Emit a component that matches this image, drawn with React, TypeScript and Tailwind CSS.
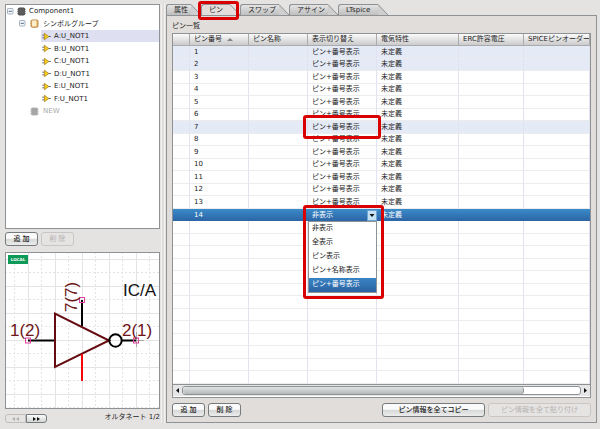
import { useState } from "react";

const TABS = ["属性", "ピン", "スワップ", "アサイン", "LTspice"];
const TAB_WIDTHS = ["w-[35px]", "w-[39px]", "w-[49px]", "w-[49px]", "w-[50px]"];
const SYMBOLS = ["A:U_NOT1", "B:U_NOT1", "C:U_NOT1", "D:U_NOT1", "E:U_NOT1", "F:U_NOT1"];
const OPTIONS = ["非表示", "全表示", "ピン表示", "ピン+名称表示", "ピン+番号表示"];
const COLUMNS = ["", "ピン番号", "ピン名称", "表示切り替え", "電気特性", "ERC許容電圧", "SPICEピンオーダー"];
const ROW_COUNT = 27;
const PIN_COUNT = 14;
const TINTED = [1, 2, 7];

const JP = "font-['DejaVu_Sans','Noto_Sans_CJK_JP',sans-serif]";

interface PushButtonProps {
    label: string;
    disabled?: boolean;
    className?: string;
}

const PushButton: React.FC<PushButtonProps> = ({ label, disabled, className = "w-[33px]" }) => (
    <button
        type="button"
        disabled={disabled}
        className={`h-[14px] shrink-0 whitespace-nowrap rounded-[3px] border text-[7px] leading-[12px] ${className} ${
            disabled
                ? "border-[#c9c7c6] bg-[#e6e4e3] text-[#b4b2b1]"
                : "border-[#777b7d] bg-linear-to-b from-[#fafafa] from-45% via-[#d6d8d8] via-50% to-[#ececec] font-medium text-[#222]"
        }`}
    >
        {label}
    </button>
);

const Expander = () => (
    <svg className="h-[7px] w-[7px] shrink-0" viewBox="0 0 7 7" aria-hidden="true">
        <rect x="0.5" y="0.5" width="5.5" height="5.5" rx="0.8" fill="#f4f7fb" stroke="#9aa8b8" strokeWidth="0.9" />
        <path d="M1.7 3.3h3.2" stroke="#3d5673" strokeWidth="0.9" />
    </svg>
);

const ChipIcon = ({ fill, edge }: { fill: string; edge: string }) => (
    <svg className="h-[9px] w-[9px] shrink-0" viewBox="0 0 9 9" aria-hidden="true">
        <path d="M0.4 2.4h8.2M0.4 4.5h8.2M0.4 6.6h8.2" stroke={edge} strokeWidth="0.9" opacity="0.7" />
        <rect x="1.3" y="0.9" width="6.4" height="7.2" rx="1.2" fill={fill} stroke={edge} strokeWidth="0.8" />
    </svg>
);

const GroupIcon = () => (
    <svg className="h-[9px] w-[9px] shrink-0" viewBox="0 0 9 9" aria-hidden="true">
        <path d="M0.4 2.4h8.2M0.4 4.5h8.2M0.4 6.6h8.2" stroke="#b98a4a" strokeWidth="0.9" opacity="0.7" />
        <rect x="1.1" y="0.9" width="6.8" height="7.4" rx="1.2" fill="#f0bd62" stroke="#a97b3c" strokeWidth="0.8" />
        <rect x="2" y="1.6" width="4.4" height="5.6" rx="0.6" fill="#fdeecb" />
    </svg>
);

const GateIcon = () => (
    <svg className="h-[9px] w-[9px] shrink-0" viewBox="0 0 9 9" aria-hidden="true">
        <path d="M0.3 3.2h2.2M0.3 5.8h2.2M6 4.5h2.8" stroke="#555" strokeWidth="0.9" />
        <path d="M2.4 1.2L6.8 4.5L2.4 7.8Z" fill="#f7cb1c" stroke="#a47c1c" strokeWidth="0.7" />
    </svg>
);

const TREE_ROW = "flex items-center whitespace-nowrap odd:h-[12px] even:h-[13px]";

const SymbolTree = () => (
    <ul className="min-h-[225px] flex-1 border border-[#8f9294] bg-white text-[7px] leading-[12px]">
        <li className={`${TREE_ROW} gap-[3px] pl-px`}>
            <Expander />
            <ChipIcon fill="#5c5c5c" edge="#444" />
            Component1
        </li>
        <li className={`${TREE_ROW} gap-[4px] pl-[13px]`}>
            <Expander />
            <GroupIcon />
            シンボルグループ
        </li>
        {SYMBOLS.map((name, i) => (
            <li key={name} className={`${TREE_ROW} pl-[35px]`}>
                <span className={`flex h-[12px] flex-1 items-center gap-[3px] pl-px ${i === 0 ? "bg-[#dedff0]" : ""}`}>
                    <GateIcon />
                    {name}
                </span>
            </li>
        ))}
        <li className={`${TREE_ROW} gap-[4px] pl-[24px] text-[#aaa]`}>
            <ChipIcon fill="#a5a5a5" edge="#b5b5b5" />
            NEW
        </li>
    </ul>
);

const GRID = [-20, 7, 34, 61, 88, 115, 142];

const Preview = () => (
    <div className="relative h-[157px] overflow-hidden border border-[#8f9294] bg-white">
        <svg
            className="h-[155px] w-[153px] font-['Liberation_Sans',Arial,sans-serif]"
            viewBox="1 1 153 155"
            role="img"
            aria-label="NOT gate symbol"
        >
            {GRID.map((p) => (
                <g key={p} stroke="#e4e4e4">
                    <path d={`M${p + 16.5} 0V160M0 ${p + 0.5}H160`} />
                    <path d={`M${p + 29.5} 0V160M0 ${p + 13.5}H160`} strokeDasharray="2 2" />
                </g>
            ))}
            <path d="M131.5 80v15M124 88.500h15" stroke="#999" strokeWidth="0.8" />
            <g fill="none" strokeWidth="2">
                <path d="M23 88.500H50M77 48V74M117 88.500H131" stroke="#000" />
                <path d="M50 61.500V115L104 88.500Z" stroke="#660c10" />
                <path d="M77 102V129" stroke="#f40808" />
                <circle cx="110.500" cy="88.500" r="6.200" stroke="#000" />
            </g>
            <g fill="none" stroke="#e0409c">
                <rect x="20.500" y="86" width="5" height="5" />
                <rect x="74.500" y="45.500" width="5" height="5" />
                <rect x="128.500" y="86" width="5" height="5" />
            </g>
            <g fontSize="17" fill="#6e1518">
                <text x="5" y="84">1(2)</text>
                <text x="117" y="84">2(1)</text>
                <text transform="translate(72 60) rotate(-90)">7(7)</text>
            </g>
            <text x="118" y="44" fontSize="17" fill="#111">
                IC/A
            </text>
        </svg>
        <span className="absolute left-[2px] top-[2px] h-[9px] w-[20px] bg-[#0d9a58] text-center text-[4px] font-bold leading-[9px] text-white">
            LOCAL
        </span>
    </div>
);

const DisplaySelect = () => {
    const [value, setValue] = useState(OPTIONS[0]);

    return (
        <>
            <div className="flex h-[12px] items-center">
                <select
                    aria-label="表示切り替え"
                    value={value}
                    onChange={(e) => setValue(e.target.value)}
                    className="h-[11px] min-w-0 flex-1 appearance-none bg-transparent pl-[4px] text-[7px] leading-[11px] text-white"
                >
                    {OPTIONS.map((o) => (
                        <option key={o}>{o}</option>
                    ))}
                </select>
                <span className="flex h-[11px] w-[10px] items-center justify-center border border-[#6fa5d3] bg-[#c5e1f6]">
                    <svg className="h-[3px] w-[6px]" viewBox="0 0 6 3" aria-hidden="true">
                        <path d="M0.500 0h5L3 3Z" fill="#111" />
                    </svg>
                </span>
            </div>
            <ul role="listbox" className="absolute left-0 top-full z-10 w-full border border-[#8f9294] bg-white text-[#222]">
                {OPTIONS.map((o, i) => (
                    <li
                        key={o}
                        role="option"
                        aria-selected={i === 4}
                        className={`h-[14px] whitespace-nowrap pl-[3px] leading-[13px] ${
                            i === 4 ? "bg-linear-to-b from-[#3a84c4] to-[#2b62a2] text-white" : ""
                        }`}
                    >
                        {o}
                    </li>
                ))}
            </ul>
            <span className="pointer-events-none absolute -left-[5px] -top-[4px] z-20 h-[94px] w-[81px] rounded-[3px] border-3 border-[#d80000]" />
        </>
    );
};

const CELL = "relative border-r border-b border-r-[#e2e2f0] border-b-[#ececee] p-0 pl-[4px]";

const PinRow = ({ n }: { n: number }) => {
    const filled = n <= PIN_COUNT;
    const active = n === PIN_COUNT;
    const tone = active
        ? "bg-linear-to-b from-[#3a8bc9] to-[#2c65a6] text-white"
        : TINTED.includes(n)
          ? "bg-[#e5eaf7]"
          : "";
    const cell = active ? "relative p-0 pl-[4px]" : CELL;

    return (
        <tr className={`odd:h-[13px] even:h-[12px] ${tone}`}>
            <td className={cell} />
            <td className={cell}>{filled && n}</td>
            <td className={cell} />
            <td className={active ? "relative p-0" : cell}>
                {active ? <DisplaySelect /> : filled && "ピン+番号表示"}
                {n === 7 && (
                    <span className="pointer-events-none absolute -left-[5px] -top-[6px] z-20 h-[24px] w-[78px] rounded-[3px] border-3 border-[#d80000]" />
                )}
            </td>
            <td className={cell}>{filled && "未定義"}</td>
            <td className={cell} />
            <td className={cell} />
        </tr>
    );
};

const PinTable = () => (
    <div className="flex-1 border border-[#8f9294] bg-white">
        <table className="w-full table-fixed border-separate border-spacing-0 whitespace-nowrap text-left text-[7px] leading-[11px]">
            <colgroup>
                <col className="w-[17px]" />
                <col className="w-[59px]" />
                <col className="w-[59px]" />
                <col className="w-[69px]" />
                <col className="w-[82px]" />
                <col className="w-[65px]" />
                <col />
            </colgroup>
            <thead>
                <tr className="h-[12px]">
                    {COLUMNS.map((c, i) => (
                        <th
                            key={i}
                            className="overflow-hidden border-r border-b border-[#a9abac] bg-linear-to-b from-[#fbfbfb] to-[#cbcbcb] p-0 pl-[4px] font-normal"
                        >
                            {c}
                            {i === 1 && (
                                <svg className="ml-[5px] inline h-[3px] w-[6px] align-middle" viewBox="0 0 6 3" aria-hidden="true">
                                    <path d="M0 3L3 0L6 3Z" fill="#858585" />
                                </svg>
                            )}
                        </th>
                    ))}
                </tr>
            </thead>
            <tbody>
                {Array.from({ length: ROW_COUNT }, (_, i) => (
                    <PinRow key={i} n={i + 1} />
                ))}
            </tbody>
        </table>
        <div className="flex h-[12px] items-center gap-[3px] border-t border-[#8f9294] bg-[#e6e6e6] px-[3px]">
            <svg className="h-[5px] w-[3px]" viewBox="0 0 3 5" aria-hidden="true">
                <path d="M3 0V5L0 2.500Z" fill="#111" />
            </svg>
            <div className="h-[9px] flex-1 rounded-[3px] border border-[#8f9294] bg-white">
                <div className="h-full w-[86%] rounded-[3px] border-r border-[#8f9294] bg-linear-to-b from-[#e2e4e4] to-[#b5b9b9]" />
            </div>
            <svg className="h-[5px] w-[3px]" viewBox="0 0 3 5" aria-hidden="true">
                <path d="M0 0V5L3 2.500Z" fill="#111" />
            </svg>
        </div>
    </div>
);

const TabBar = () => {
    const [current, setCurrent] = useState(1);

    return (
        <div role="tablist" className="flex h-[11px] items-end">
            {TABS.map((t, i) => (
                <button
                    key={t}
                    type="button"
                    role="tab"
                    aria-selected={i === current}
                    onClick={() => setCurrent(i)}
                    className={`relative flex h-[11px] whitespace-nowrap text-[7px] leading-[11px] ${TAB_WIDTHS[i]}`}
                >
                    <span
                        className={`h-full flex-1 rounded-tl-[3px] border-l border-t border-[#8f9294] pl-[7px] text-left ${
                            i === current ? "bg-[#e3dedc]" : "bg-linear-to-b from-[#e4e4e4] to-[#bfbfbf]"
                        }`}
                    >
                        {t}
                    </span>
                    <svg className="h-[11px] w-[10px] shrink-0" viewBox="0 0 10 11" aria-hidden="true">
                        <path d="M0 0.500L10 11H0Z" fill={i === current ? "#e3dedc" : "#cfcfcf"} />
                        <path d="M0 0.500L10 11" stroke="#8f9294" />
                    </svg>
                    {i === 1 && (
                        <span className="pointer-events-none absolute -left-[3px] -top-[3px] z-20 h-[19px] w-[41px] rounded-[3px] border-3 border-[#d80000]" />
                    )}
                </button>
            ))}
        </div>
    );
};

const App = () => (
    <div className={`flex min-h-screen bg-[#e5e3e1] pb-[6px] pl-[5px] pr-[3px] pt-[4px] text-[#222] ${JP}`}>
        <aside className="flex w-[155px] shrink-0 flex-col">
            <SymbolTree />
            <div className="flex gap-[3px] pb-[6px] pt-[3px]">
                <PushButton label="追 加" />
                <PushButton label="削 除" disabled />
            </div>
            <Preview />
            <div className="flex h-[14px] items-end justify-between">
                <div className="flex">
                    <button
                        type="button"
                        disabled
                        aria-label="前へ"
                        className="flex h-[9px] w-[21px] items-center justify-center rounded-l-[3px] border border-[#c0bfbe] bg-[#e6e4e3]"
                    >
                        <svg className="h-[4px] w-[7px]" viewBox="0 0 7 4" aria-hidden="true">
                            <path d="M3 0V4L0 2ZM7 0V4L4 2Z" fill="#b0b0b0" />
                        </svg>
                    </button>
                    <button
                        type="button"
                        aria-label="次へ"
                        className="flex h-[9px] w-[21px] items-center justify-center rounded-r-[3px] border border-[#777b7d] bg-linear-to-b from-[#fafafa] to-[#d4d6d6]"
                    >
                        <svg className="h-[4px] w-[7px]" viewBox="0 0 7 4" aria-hidden="true">
                            <path d="M0 0V4L3 2ZM4 0V4L7 2Z" fill="#111" />
                        </svg>
                    </button>
                </div>
                <span className="text-[7px] leading-[11px]">オルタネート 1/2</span>
            </div>
        </aside>
        <div className="mx-px w-[4px] shrink-0 border-x border-[#f3f2f1] bg-[#dfdddb]" />
        <main className="flex min-w-0 flex-1 flex-col">
            <TabBar />
            <section className="flex flex-1 flex-col border border-[#8f9294] bg-[#e1dddb] px-[5px] pb-[5px]">
                <h2 className="pt-[4px] text-[7px] leading-[13px]">ピン一覧</h2>
                <PinTable />
                <div className="flex gap-[3px] pt-[5px]">
                    <PushButton label="追 加" />
                    <PushButton label="削 除" />
                    <span className="flex-1" />
                    <PushButton label="ピン情報を全てコピー" className="w-[103px]" />
                    <PushButton label="ピン情報を全て貼り付け" className="w-[103px]" disabled />
                </div>
            </section>
        </main>
    </div>
);

export default App;
